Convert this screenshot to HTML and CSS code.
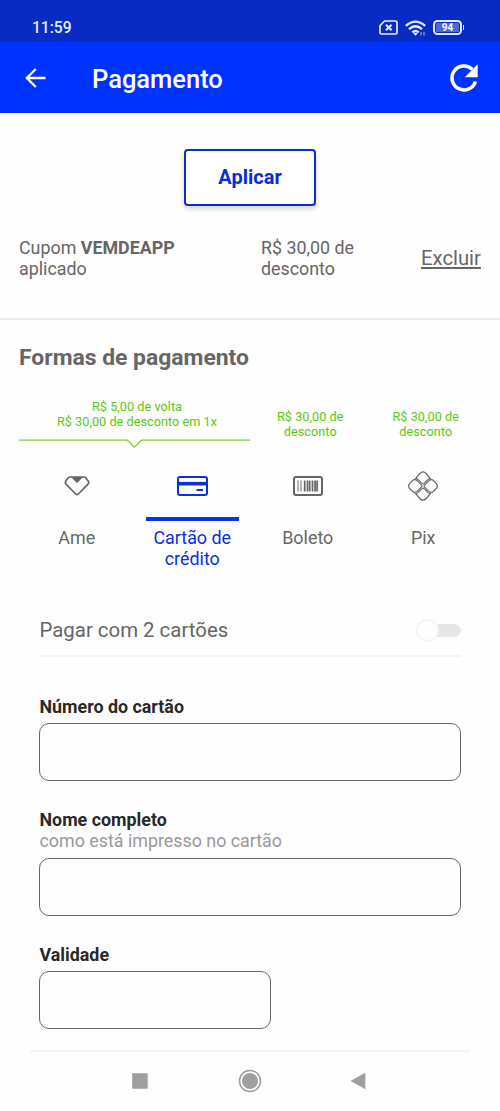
FILE: index.html
```html
<!DOCTYPE html>
<html lang="pt-BR">
<head>
<meta charset="utf-8">
<meta name="viewport" content="width=device-width">
<title>Pagamento</title>
<link rel="stylesheet" href="styles.css">
</head>
<body>
<div class="status">
  <span class="clock">11:59</span>
  <div class="status-icons">
    <svg width="19" height="15" viewBox="0 0 19 15" fill="none" stroke="#e6ecff" stroke-width="1.7"><path d="M5.6 1H16.500Q18 1 18 2.500V12.500Q18 14 16.500 14H2.500Q1 14 1 12.500V5.600Z" stroke-linejoin="round"/><path d="M7 4.700l5.600 5.600M12.600 4.700l-5.600 5.600" stroke-width="2"/></svg>
    <svg width="22" height="16" viewBox="0 0 22 16" fill="none" stroke="#e6ecff" stroke-width="2.300"><path d="M.8 5.800Q10.500-2.600 20.200 5.800M4 9.200Q10.500 3.400 17 9.200M7.300 12.400Q10.500 9.600 13.700 12.400"/><path d="M8.300 13.500l2.200 2.200 2.200-2.200q-2.200-1.500-4.400 0z" fill="#e6ecff" stroke="none"/><path d="M16 12v3.500M19 12v3.500" stroke-width="1.100" opacity=".65"/></svg>
    <div class="battery"><span>94</span></div>
  </div>
</div>
<header class="appbar">
  <svg class="back" width="21" height="20" viewBox="0 0 21 20" fill="none" stroke="#fff" stroke-width="2.300"><path d="M20.500 10H2M10.800 1L1.800 10l9 9"/></svg>
  <h1>Pagamento</h1>
  <svg class="reload" width="28" height="28" viewBox="0 0 28 28"><path d="M25.500 17.400A12 12 0 1 1 22.300 5.200" fill="none" stroke="#fff" stroke-width="3.500"/><path d="M27.700.3V13.300H14.700Z" fill="#fff"/></svg>
</header>
<section class="coupon">
  <button class="apply">Aplicar</button>
  <div class="coupon-row">
    <p class="coupon-name">Cupom <b>VEMDEAPP</b><br>aplicado</p>
    <p class="coupon-value">R$ 30,00 de<br>desconto</p>
    <a class="remove">Excluir</a>
  </div>
</section>
<main class="payment">
  <h2>Formas de pagamento</h2>
  <div class="offers">
    <div class="offer wide">
      <p>R$ 5,00 de volta<br>R$ 30,00 de desconto em 1x</p>
      <svg width="231" height="9" viewBox="0 0 231 9" fill="none" stroke="#7cd03c" stroke-width="1.300"><path d="M0 1.200H108.500L115.500 8L122.500 1.200H231"/></svg>
    </div>
    <div class="offer"><p>R$ 30,00 de<br>desconto</p></div>
    <div class="offer"><p>R$ 30,00 de<br>desconto</p></div>
  </div>
  <div class="methods">
    <div class="method">
      <div class="icon"><svg width="26" height="20" viewBox="0 0 26 20"><path d="M6 1H20Q21 1 21.700 1.700L24.200 5Q25.300 6.700 24 8.200L14.300 18Q13 19.300 11.700 18L2 8.200Q.7 6.700 1.800 5L4.300 1.700Q5 1 6 1Z" fill="none" stroke="#666" stroke-width="1.700"/><path d="M7 1H19L14.200 6Q13 7.300 11.800 6Z" fill="#666"/></svg></div>
      <p>Ame</p>
    </div>
    <div class="method active">
      <div class="icon"><svg width="31" height="20" viewBox="0 0 31 20"><rect x="1" y="1" width="29" height="18" rx="2" fill="none" stroke="#0a2fe0" stroke-width="2"/><path d="M1 7.700H30" stroke="#0a2fe0" stroke-width="3.600"/><path d="M19.500 14H26" stroke="#0a2fe0" stroke-width="2"/></svg></div>
      <p>Cartão de<br>crédito</p>
    </div>
    <div class="method">
      <div class="icon"><svg width="30" height="20" viewBox="0 0 30 20"><rect x="1" y="1" width="28" height="18" rx="2" fill="none" stroke="#666" stroke-width="2"/><path d="M5 4.500V15.500M8 4.500V15.500M21.700 4.500V15.500M24.600 4.500V15.500" stroke="#666" stroke-width="1"/><path d="M11.700 4.500V15.500M14.500 4.500V15.500M16.700 4.500V15.500M19.500 4.500V15.500M22.900 4.500V15.500" stroke="#666" stroke-width="1.700"/></svg></div>
      <p>Boleto</p>
    </div>
    <div class="method">
      <div class="icon"><svg width="30" height="30" viewBox="0 0 30 30" fill="none" stroke="#666" stroke-width="1.200"><path d="M7.700 7.300L11.800 2.500Q15-.8 18.200 2.500L22.300 7.300Q20.600 7.700 19.500 8.900L16 12.400Q15 13.300 14 12.400L10.500 8.900Q9.400 7.700 7.700 7.300Z"/><path d="M7.700 22.700L11.800 27.500Q15 30.800 18.200 27.500L22.300 22.700Q20.600 22.300 19.500 21.100L16 17.600Q15 16.700 14 17.600L10.500 21.100Q9.400 22.300 7.700 22.700Z"/><path d="M5.400 8.900Q7.700 8.200 9.400 9.900L13.600 14.100Q14.500 15 13.600 15.900L9.400 20.100Q7.700 21.800 5.400 21.100L2 17.800Q-.8 15 2 12.200Z"/><path d="M24.600 8.900Q22.300 8.200 20.600 9.900L16.400 14.100Q15.500 15 16.400 15.900L20.600 20.100Q22.300 21.800 24.600 21.100L28 17.800Q30.800 15 28 12.200Z"/></svg></div>
      <p>Pix</p>
    </div>
  </div>
  <form class="card-form">
    <div class="two-cards"><span>Pagar com 2 cartões</span><i class="switch"></i></div>
    <label>Número do cartão</label>
    <input type="text">
    <label>Nome completo<small>como está impresso no cartão</small></label>
    <input class="name" type="text">
    <label>Validade</label>
    <input class="short" type="text">
  </form>
</main>
<nav class="sysnav">
  <svg width="16" height="16"><rect width="15.500" height="15.500" x=".2" y=".2" rx=".8" fill="#9f9f9f"/></svg>
  <svg width="24" height="24"><circle cx="12" cy="12" r="10.500" fill="none" stroke="#9a9a9a" stroke-width="1.500"/><circle cx="12" cy="12" r="8" fill="#9f9f9f"/></svg>
  <svg class="nav-back" width="16" height="18"><path d="M15.300.8V17.200L.5 9Z" fill="#9f9f9f"/></svg>
</nav>
</body>
</html>
```
FILE: styles.css
```css
* { box-sizing: border-box; }
body {
  margin: 0;
  height: 1111px;
  overflow: hidden;
  background: #fefefe;
  color: #666;
  font-family: Roboto, sans-serif;
}
p, h1, h2 { margin: 0; }
svg { display: block; flex: none; }

.status {
  height: 42px;
  padding: 14px 34px 0 32px;
  display: flex;
  justify-content: space-between;
  background: #082bc4;
  color: #e6ecff;
}
.clock { font-size: 15.600px; font-weight: 500; line-height: 29px; }
.status-icons { display: flex; align-items: center; gap: 7px; height: 27px; }
.battery {
  position: relative;
  width: 29px;
  height: 15px;
  margin: 0 4px 0 -1px;
  padding: 1px;
  border: 2px solid #e6ecff;
  border-radius: 4.500px;
}
.battery span {
  display: block;
  width: 23px;
  height: 9px;
  border-radius: 1px;
  background: #4a68d6;
  color: #fff;
  font-size: 10px;
  font-weight: 700;
  line-height: 10px;
  text-align: center;
}
.battery::after {
  content: "";
  position: absolute;
  right: -4px;
  top: 3px;
  width: 1.500px;
  height: 5px;
  background: #e6ecff;
}

.appbar {
  height: 71px;
  padding: 0 22px 0 25px;
  display: flex;
  align-items: center;
  background: #0032ff;
  color: #fff;
}
.appbar h1 { margin: 2px auto 0 46px; font-size: 25.500px; font-weight: 500; line-height: 30px; }

.coupon { height: 207px; padding-top: 36px; border-bottom: 2px solid #ececec; }
.apply {
  display: block;
  width: 132px;
  height: 57px;
  margin: 0 auto;
  padding: 0 6px 2px;
  border: 2px solid #0a2bd8;
  border-radius: 4px;
  background: #fff;
  box-shadow: 0 3px 5px rgba(0, 0, 0, .16);
  color: #0a2bd8;
  font: 700 20px/24px Roboto, sans-serif;
}
.coupon-row {
  display: grid;
  grid-template-columns: 242px 160px auto;
  margin: 31px 18px 0 19px;
  font-size: 17.850px;
  line-height: 21px;
}
.remove { align-self: center; font-size: 20.300px; line-height: 24px; text-decoration: underline; }

.payment { padding: 22px 19px 0; }
.payment h2 { font-size: 22.900px; line-height: 32px; font-weight: 700; }
.offers {
  display: grid;
  grid-template-columns: 2fr 1fr 1fr;
  height: 49px;
  margin-top: 25px;
  color: #5fc70f;
  font-size: 12.750px;
  line-height: 15px;
  text-align: center;
}
.offer { padding-top: 10px; }
.offer p { padding-left: 5px; }
.offer.wide { padding-top: 0; }
.offer.wide svg { margin-top: 10px; }
.methods { display: grid; grid-template-columns: repeat(4, 1fr); margin-top: 18px; }
.method { margin: 0 11.500px; text-align: center; font-size: 17.900px; line-height: 21px; }
.icon {
  height: 55px;
  margin-bottom: 6px;
  padding-bottom: 12px;
  display: flex;
  align-items: center;
  justify-content: center;
  border-bottom: 4px solid transparent;
}
.active { color: #0a2fe0; }
.active .icon { border-color: #0a32ee; }

.card-form { margin: 37px 20px 0; }
.two-cards {
  display: flex;
  justify-content: space-between;
  align-items: center;
  height: 51px;
  margin-bottom: 39px;
  padding: 0 0 1px .5px;
  border-bottom: 2px solid #f4f4f4;
  font-size: 20.400px;
}
.switch {
  position: relative;
  width: 40px;
  height: 13px;
  border-radius: 7px;
  background: #e6e6e6;
}
.switch::before {
  content: "";
  position: absolute;
  left: -5px;
  top: -5px;
  width: 19px;
  height: 19px;
  border: 2px solid #f5f5f5;
  border-radius: 50%;
  background: #fefefe;
}
label { display: block; padding-left: .5px; color: #292929; font-size: 17.850px; font-weight: 700; line-height: 22px; }
label small { display: block; color: #999; font-size: 17.850px; font-weight: 400; line-height: 20px; }
input {
  display: block;
  width: 422px;
  height: 58px;
  margin: 5px 0 28px;
  border: 1px solid #666;
  border-radius: 10px;
  background: transparent;
}
input.name { margin-top: 7px; }
input.short { width: 232px; margin-bottom: 0; }

.sysnav {
  display: flex;
  align-items: center;
  justify-content: center;
  gap: 90px;
  height: 61px;
  margin: 21px 30px 0;
  padding-bottom: 2px;
  border-top: 2px solid #f4f4f4;
}
.nav-back { margin: 0 2px 0 -2px; }
```
